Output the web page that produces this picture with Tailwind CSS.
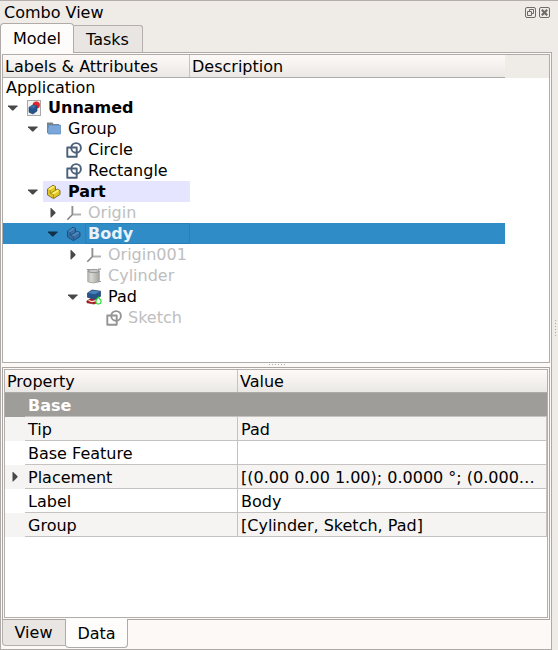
<!DOCTYPE html>
<html lang="en"><head><meta charset="utf-8"><title>Combo View</title>
<script src="https://cdn.jsdelivr.net/npm/@tailwindcss/browser@4"></script></head>
<body class="w-[558px] h-[650px] overflow-hidden bg-[#efebe7] text-black text-[16px] leading-[21px] font-['DejaVu_Sans',sans-serif] whitespace-nowrap">
<svg class="hidden">
<symbol id="down" viewBox="0 0 10 6"><path d="M0 0.5H9.5V1.2L5.3 5.5H4.2L0 1.2Z" fill="currentColor"/></symbol>
<symbol id="right" viewBox="0 0 6 10"><path d="M.5 0H1.2L5.5 4.2V5.3L1.2 9.5H.5Z" fill="currentColor"/></symbol>
<symbol id="sketch" viewBox="0 0 16 16"><path d="M1.3 5.5H10.7V14.7H1.3Z" fill="none" stroke="currentColor" stroke-width="1.9" stroke-linejoin="round"/><circle cx="10.1" cy="5.9" r="4.8" fill="none" stroke="currentColor" stroke-width="1.9"/></symbol>
<symbol id="axes" viewBox="0 0 16 16"><path d="M6.5 1V9.5L1.3 14.7" fill="none" stroke="#858585" stroke-width="1.6"/><path d="M7 9.5H15" stroke="#b0b0b0" stroke-width="2"/><path d="M5.7 1V9" stroke="#bbb" stroke-width="1"/></symbol>
</svg>
<div class="w-full h-full flex flex-col border-t border-[#b5aeab]">
  <div class="h-[22px] flex items-center justify-between pl-[4px] pr-[8px] shrink-0">
    <span class="pt-px">Combo View</span>
    <div class="flex gap-[3px] pt-px">
      <svg width="11" height="11" viewBox="0 0 11 11" fill="none" stroke="#6e6a67"><rect x=".5" y=".5" width="10" height="10" rx="1.5"/><path d="M4.5 4.5V2.5H8.5V6.5H6.5M2.5 4.5H6.5V8.5H2.5Z"/></svg>
      <svg width="11" height="11" viewBox="0 0 11 11" fill="none" stroke="#6e6a67"><rect x=".5" y=".5" width="10" height="10" rx="1.5"/><path d="M2.8 2.8L8.2 8.2M8.2 2.8L2.8 8.2" stroke-width="2.2"/></svg>
    </div>
  </div>
  <div class="h-[29px] flex items-end shrink-0">
    <div class="relative z-10 w-[74px] h-[30px] border border-b-0 border-[#b0aba8] rounded-t-[4px] bg-[#fefcfb] text-center pt-[4px] -mb-px">Model</div>
    <div class="w-[69px] h-[27px] border border-l-0 border-b-0 border-[#b5b0ad] rounded-tr-[3px] bg-[#e9e5e2] text-center pt-[3px] pr-px">Tasks</div>
  </div>
  <div class="flex h-[598px] shrink-0">
  <div class="w-[552px] h-[598px] border border-[#aeaaa7] bg-[#fdf9f6] flex flex-col px-px pt-px shrink-0">
    <div class="h-[309px] w-[548px] border border-[#b0aca9] bg-white shrink-0">
      <div class="h-[23px] bg-[#efebe7] flex">
        <div class="w-[502px] h-[23px] flex border-b border-[#aeaaa7] bg-linear-to-b from-[#fdf9f7] from-0% via-[#f4f1ee] via-50% to-[#eae8e5] to-100%">
          <div class="w-[187px] border-r border-[#c6c2bf] pl-[2px] pt-px">Labels &amp; Attributes</div><div class="pl-[2px] pt-px">Description</div>
        </div>
      </div>
      <div class="h-[19px] pl-[3px] leading-[19px]">Application</div>
      <div class="h-[21px] flex items-center pl-[5px] text-[#484848]"><svg class="w-[10px] h-[6px]"><use href="#down"/></svg>
        <svg class="ml-[8px]" width="16" height="16" viewBox="0 0 16 16"><rect x="1.5" y=".5" width="13" height="15" fill="#f2f2f2" stroke="#a9a9a9"/><circle cx="10.3" cy="5" r="3.6" fill="#e2262b"/><path d="M3 7.2L7.3 4.7L11 6V11L7 14L3 12.3Z" fill="#24548a" stroke="#183b66" stroke-width=".6"/><path d="M3.2 7.2L7.2 4.9L10.7 6.1L7 8.5Z" fill="#3b6da5"/></svg>
        <b class="ml-[6px] text-black">Unnamed</b></div>
      <div class="h-[21px] flex items-center pl-[25px] text-[#484848]"><svg class="w-[10px] h-[6px]"><use href="#down"/></svg>
        <svg class="ml-[8px]" width="16" height="16" viewBox="0 0 16 16"><path d="M1 1.5H6.5L7.5 3H13V7H2V12H1Z" fill="#808080"/><path d="M2.3 4H14.5V13H2.3Z" fill="#79a7d9" stroke="#5688bd" stroke-width=".7"/></svg>
        <span class="ml-[6px] text-black">Group</span></div>
      <div class="h-[21px] flex items-center pl-[63px] text-[#4b6079]"><svg class="w-4 h-4"><use href="#sketch"/></svg><span class="ml-[6px] text-black">Circle</span></div>
      <div class="h-[21px] flex items-center pl-[63px] text-[#4b6079]"><svg class="w-4 h-4"><use href="#sketch"/></svg><span class="ml-[6px] text-black">Rectangle</span></div>
      <div class="h-[21px] flex items-center pl-[25px] text-[#484848]"><svg class="w-[10px] h-[6px]"><use href="#down"/></svg>
        <div class="ml-[5px] pl-[3px] w-[147px] h-[21px] bg-[#e5e5ff] flex items-center"><svg width="16" height="16" viewBox="0 0 16 16"><path d="M1.5 5L7 1.2L9.5 2.5V6.2L11.5 5.2L14 6.5V10.5L7.5 14.6L1.5 11Z" fill="#e0c628" stroke="#766817" stroke-width=".9"/><path d="M2.2 5L7 1.8L8.8 2.8L4.2 6ZM5.2 9.6L11.5 5.8L13.3 6.7L7.5 10.5Z" fill="#fff068"/><path d="M4.2 6.1V9.3L7.5 10.8V14M4.8 9.2L9.5 6.2" fill="none" stroke="#8b7a19" stroke-width=".7"/></svg>
        <b class="ml-[6px] text-black">Part</b></div></div>
      <div class="h-[21px] flex items-center pl-[47px] text-[#484848]"><svg class="w-[6px] h-[10px]"><use href="#right"/></svg><svg class="ml-[10px] w-4 h-4"><use href="#axes"/></svg><span class="ml-[6px] text-[#bebebe]">Origin</span></div>
      <div class="h-[21px] w-[502px] bg-[#308cc6] flex items-center pl-[45px] text-[#123047]"><svg class="w-[10px] h-[6px]"><use href="#down"/></svg>
        <svg class="ml-[8px]" width="16" height="16" viewBox="0 0 16 16"><path d="M1.5 5L7 1.2L9.5 2.5V6.2L11.5 5.2L14 6.5V10.5L7.5 14.6L1.5 11Z" fill="#376fa5" stroke="#1b4b77" stroke-width=".9"/><path d="M2.2 5L7 1.8L8.8 2.8L4.2 6ZM5.2 9.6L11.5 5.8L13.3 6.7L7.5 10.5Z" fill="#4c8abf"/><path d="M4.2 6.1V9.3L7.5 10.8V14M4.8 9.2L9.5 6.2" fill="none" stroke="#1b4b77" stroke-width=".7"/></svg>
        <b class="ml-[3px] pl-[2px] w-[105px] h-[21px] border border-[#2980b8] rounded-[1px] text-[#e9f2f8] leading-[19px]">Body</b></div>
      <div class="h-[21px] flex items-center pl-[67px] text-[#484848]"><svg class="w-[6px] h-[10px]"><use href="#right"/></svg><svg class="ml-[10px] w-4 h-4"><use href="#axes"/></svg><span class="ml-[6px] text-[#bebebe]">Origin001</span></div>
      <div class="h-[21px] flex items-center pl-[83px]"><svg width="16" height="16" viewBox="0 0 16 16"><defs><linearGradient id="cyl"><stop stop-color="#bdbdb9"/><stop offset=".3" stop-color="#d8d7d2"/><stop offset="1" stop-color="#a3a39f"/></linearGradient></defs><path d="M1.8 3V13.8Q7.5 16 13.3 13.8V3Z" fill="url(#cyl)" stroke="#9b9b97" stroke-width=".8"/><ellipse cx="7.6" cy="3" rx="5.7" ry="1.6" fill="#c8c8c4" stroke="#808080" stroke-width=".8"/><path d="M.8 1.7H4M12 1.2H15M12.8 13.5H15" stroke="#999" stroke-width="1.2"/></svg><span class="ml-[6px] text-[#bebebe]">Cylinder</span></div>
      <div class="h-[21px] flex items-center pl-[65px] text-[#484848]"><svg class="w-[10px] h-[6px]"><use href="#down"/></svg>
        <svg class="ml-[8px]" width="16" height="16" viewBox="0 0 16 16"><path d="M.8 12L5 9.5L10 11L13 13L8 15L1 13.8Z" fill="#b0151b" stroke="#75161a" stroke-width=".6"/><path d="M2.5 11.5L6 12.6L10 11.6" fill="none" stroke="#f4f4f4" stroke-width="1.3"/><path d="M1.5 4L6 1L14.5 2.2V7.3L9 10.2L1.5 8.3Z" fill="#245489" stroke="#173b64" stroke-width=".7"/><path d="M2 4L6 1.5L14 2.6L9 5.2Z" fill="#4a80b9"/><path d="M12.5 8.2L14 10.3A2.6 2.6 0 1 1 10.7 10.5Z" fill="#fff" stroke="#13dd20" stroke-width="1.1"/></svg>
        <span class="ml-[6px] text-black">Pad</span></div>
      <div class="h-[21px] flex items-center pl-[103px] text-[#949494]"><svg class="w-4 h-4"><use href="#sketch"/></svg><span class="ml-[6px] text-[#bebebe]">Sketch</span></div>
    </div>
    <div class="h-[4px] shrink-0 flex justify-center items-start pt-px gap-[2px] pl-px"><i class="size-px bg-[#aaa]"></i><i class="size-px bg-[#aaa]"></i><i class="size-px bg-[#aaa]"></i><i class="size-px bg-[#aaa]"></i><i class="size-px bg-[#aaa]"></i><i class="size-px bg-[#aaa]"></i></div>
    <div class="h-[253px] w-[548px] border border-[#aaa6a3] p-px shrink-0">
      <div class="h-[249px] border border-[#b2aeab] bg-white">
        <div class="h-[23px] flex border-b border-[#aeaba7] bg-linear-to-b from-[#fdf9f7] via-[#f4f1ee] to-[#eae8e5]"><div class="w-[233px] border-r border-[#c6c2bf] pl-[2px] pt-px">Property</div><div class="pl-[2px] pt-px">Value</div></div>
        <div class="h-[24px] bg-[#9f9d99] flex pl-[20px]"><b class="w-full border-b border-[#c6c2bf] pl-[3px] pt-[2px] text-white">Base</b></div>
        <div class="h-[24px] bg-[#f5f4f2] flex pl-[20px]"><div class="w-[213px] border-r border-b border-[#c6c2bf] pl-[3px] pt-[2px]">Tip</div><div class="flex-1 border-b border-r border-[#c6c2bf] pl-[3px] pt-[2px]">Pad</div></div>
        <div class="h-[24px] flex pl-[20px]"><div class="w-[213px] border-r border-b border-[#c6c2bf] pl-[3px] pt-[2px]">Base Feature</div><div class="flex-1 border-b border-r border-[#c6c2bf]"></div></div>
        <div class="h-[24px] bg-[#f5f4f2] flex"><div class="w-[20px] flex items-center pl-[7px] text-[#484848]"><svg class="w-[6px] h-[10px]"><use href="#right"/></svg></div><div class="w-[213px] border-r border-b border-[#c6c2bf] pl-[3px] pt-[2px]">Placement</div><div class="flex-1 border-b border-r border-[#c6c2bf] pl-[3px] pt-[2px]">[(0.00 0.00 1.00); 0.0000 °; (0.000…</div></div>
        <div class="h-[24px] flex pl-[20px]"><div class="w-[213px] border-r border-b border-[#c6c2bf] pl-[3px] pt-[2px]">Label</div><div class="flex-1 border-b border-r border-[#c6c2bf] pl-[3px] pt-[2px]">Body</div></div>
        <div class="h-[24px] bg-[#f5f4f2] flex pl-[20px]"><div class="w-[213px] border-r border-b border-[#c6c2bf] pl-[3px] pt-[2px]">Group</div><div class="flex-1 border-b border-r border-[#c6c2bf] pl-[3px] pt-[2px]">[Cylinder, Sketch, Pad]</div></div>
      </div>
    </div>
    <div class="flex h-[29px] items-start shrink-0"><div class="w-[63px] h-[26px] border border-t-0 border-r-0 border-[#b5b0ad] rounded-bl-[4px] bg-[#e9e5e2] text-center pt-[2px] pr-px">View</div><div class="relative -mt-px w-[63px] h-[29px] border border-t-0 border-[#aeaaa7] rounded-b-[4px] bg-[#fefdfc] text-center pt-[4px]">Data</div></div>
  </div>
  <div class="pl-[3px] pt-[268px] flex flex-col gap-[2px]"><i class="size-px bg-[#aaa]"></i><i class="size-px bg-[#aaa]"></i><i class="size-px bg-[#aaa]"></i><i class="size-px bg-[#aaa]"></i><i class="size-px bg-[#aaa]"></i><i class="size-px bg-[#aaa]"></i></div>
  </div>
</div>
</body></html>
